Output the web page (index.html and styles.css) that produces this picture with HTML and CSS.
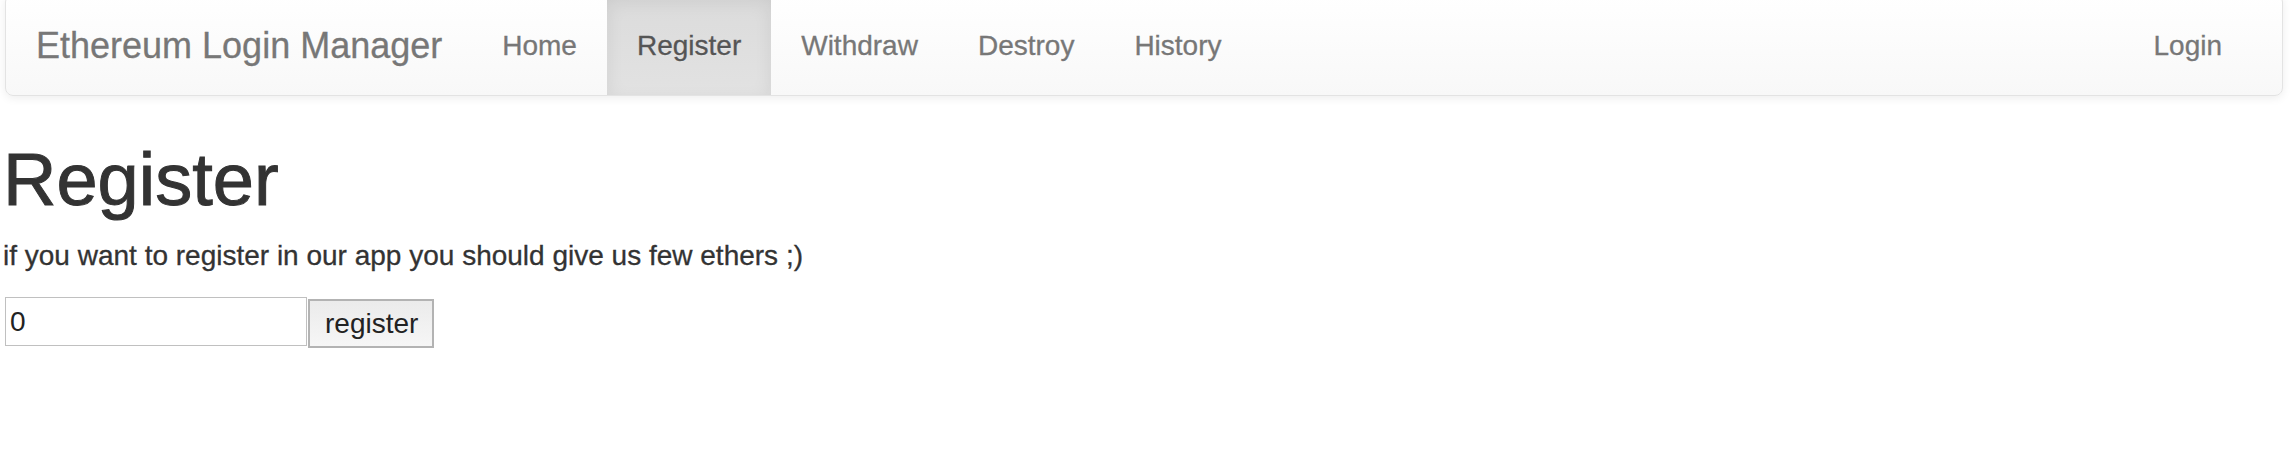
FILE: index.html
```html
<!DOCTYPE html>
<html>
<head>
<meta charset="utf-8">
<title>Ethereum Login Manager</title>
<link rel="stylesheet" href="styles.css">
</head>
<body>
<nav class="navbar">
  <div class="nav-inner">
    <a class="brand" href="#">Ethereum Login Manager</a>
    <ul class="nav">
      <li><a href="#">Home</a></li>
      <li class="active"><a href="#">Register</a></li>
      <li><a href="#">Withdraw</a></li>
      <li><a href="#">Destroy</a></li>
      <li><a href="#">History</a></li>
    </ul>
    <ul class="nav nav-right">
      <li><a href="#">Login</a></li>
    </ul>
  </div>
</nav>
<main class="content">
  <h1 class="title">Register</h1>
  <p class="lead">if you want to register in our app you should give us few ethers ;)</p>
  <form class="reg-form">
    <input class="amount" type="text" value="0">
    <button class="reg-btn" type="button">register</button>
  </form>
</main>
</body>
</html>
```

FILE: styles.css
```css
html, body {
  margin: 0;
  padding: 0;
  background: #fff;
}
body {
  font-family: "Liberation Sans", Arial, Helvetica, sans-serif;
  color: #333;
}
.navbar {
  margin: -6px 11px 0 5px;
  border: 1px solid #e3e3e3;
  border-radius: 8px;
  background: linear-gradient(to bottom, #ffffff 0%, #f8f8f8 100%);
  box-shadow: inset 0 2px 0 rgba(255,255,255,.15), 0 2px 10px rgba(0,0,0,.075);
}
.nav-inner {
  display: flex;
  align-items: stretch;
  height: 100px;
  padding: 0 30px 0 0;
}
.brand {
  display: block;
  padding: 31px 30px 29px;
  font-size: 36px;
  line-height: 40px;
  color: #777;
  text-decoration: none;
  text-shadow: 0 1px 0 rgba(255,255,255,.25);
  -webkit-text-stroke: 0.3px #777;
}
.nav {
  display: flex;
  list-style: none;
  margin: 0;
  padding: 0;
}
.nav li {
  display: flex;
}
.nav a {
  display: block;
  padding: 31px 30px 29px;
  font-size: 28px;
  line-height: 40px;
  color: #777;
  text-decoration: none;
  text-shadow: 0 1px 0 rgba(255,255,255,.25);
  -webkit-text-stroke: 0.3px #777;
}
.nav li.active a {
  color: #555;
  -webkit-text-stroke: 0.3px #555;
  background: linear-gradient(to bottom, #dbdbdb 0%, #e2e2e2 100%);
  box-shadow: inset 0 6px 18px rgba(0,0,0,.075);
}
.nav-right {
  margin-left: auto;
}
.content {
  padding: 0 5px;
}
.title {
  margin: 43px 0 0 -2px;
  font-size: 74px;
  line-height: 1.1;
  font-weight: 400;
  color: #333;
  -webkit-text-stroke: 1px #333;
}
.lead {
  margin: 16px 0 0 -2px;
  font-size: 28px;
  line-height: 40px;
  color: #333;
  -webkit-text-stroke: 0.3px #333;
}
.reg-form {
  display: flex;
  align-items: flex-start;
  margin-top: 21px;
}
.amount {
  box-sizing: border-box;
  width: 302px;
  height: 49px;
  margin: 0;
  padding: 0 4px;
  border: 1px solid #c0c0c0;
  font-family: "Liberation Sans", Arial, sans-serif;
  font-size: 28px;
  color: #222;
  background: #fff;
  outline: none;
}
.reg-btn {
  box-sizing: border-box;
  width: 126px;
  height: 49px;
  margin: 2px 0 0 1px;
  padding: 0 15px;
  border: 2px solid #b3b3b3;
  background: linear-gradient(to bottom, #ebebeb 0%, #f6f6f6 100%);
  font-family: "Liberation Sans", Arial, sans-serif;
  font-size: 28px;
  color: #222;
}
```
